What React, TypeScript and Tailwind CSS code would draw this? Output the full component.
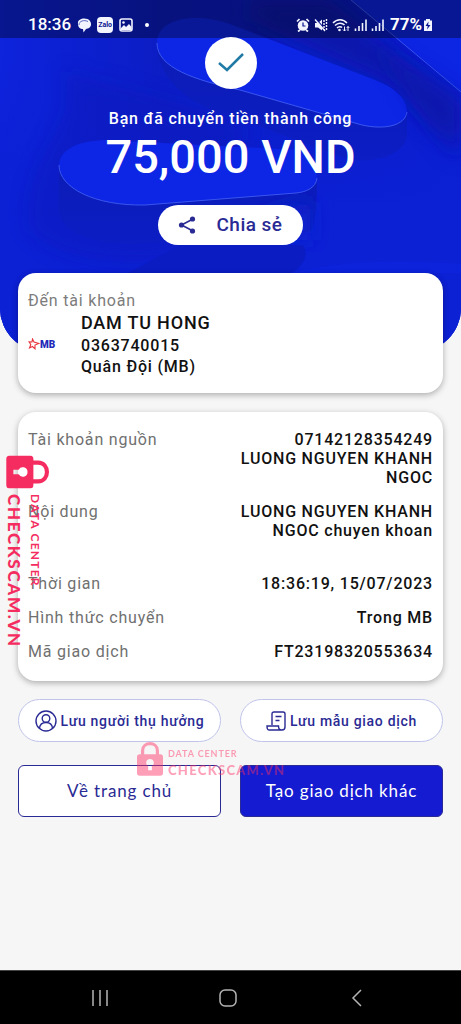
import type { ReactNode } from "react";

const details = [
    { label: "Tài khoản nguồn", lines: ["07142128354249", "LUONG NGUYEN KHANH NGOC"] },
    { label: "Nội dung", lines: ["LUONG NGUYEN KHANH NGOC chuyen khoan"], tall: true },
    { label: "Thời gian", lines: ["18:36:19, 15/07/2023"] },
    { label: "Hình thức chuyển", lines: ["Trong MB"] },
    { label: "Mã giao dịch", lines: ["FT23198320553634"] },
];

function HeroArt() {
    return (
        <svg className="absolute inset-0 h-full w-full" viewBox="0 0 461 352" preserveAspectRatio="none" aria-hidden="true">
            <defs>
                <linearGradient id="base" x1="0" y1="0" x2="1" y2="0">
                    <stop offset="0" stopColor="#0d23dc" />
                    <stop offset="0.35" stopColor="#0c1dc4" />
                    <stop offset="0.7" stopColor="#0b1cc6" />
                    <stop offset="1" stopColor="#0c20d2" />
                </linearGradient>
                <linearGradient id="floor" x1="0" y1="0" x2="0" y2="1">
                    <stop offset="0" stopColor="#0c20d4" stopOpacity="0" />
                    <stop offset="0.5" stopColor="#0c20d4" />
                </linearGradient>
                <linearGradient id="side" x1="0" y1="0" x2="0" y2="1">
                    <stop offset="0" stopColor="#0b1cb6" />
                    <stop offset="1" stopColor="#0c1ec4" />
                </linearGradient>
                <filter id="soft" x="-30%" y="-30%" width="160%" height="160%">
                    <feGaussianBlur stdDeviation="10" />
                </filter>
            </defs>
            <rect width="461" height="352" fill="url(#base)" />
            <rect y="60" width="461" height="292" fill="url(#floor)" />
            <path d="M60 70 C90 120 20 150 30 230 C80 280 200 260 250 245 L240 120Z" fill="#0a18b0" opacity="0.35" filter="url(#soft)" />
            <path d="M330 0 L461 105 V140 C420 130 410 90 370 75 L250 20 V0Z" fill="#0a16a0" opacity="0.7" filter="url(#soft)" />

            <path d="M157 43 C157 85 200 110 240 119 L350 160 C385 163 407 150 407 135 V105Z" fill="url(#side)" />
            <path d="M157 43 C157 18 195 12 230 24 L375 80 C398 89 407 100 407 112 C405 126 384 130 362 125 L240 90 C195 80 157 68 157 43Z" fill="#0d26e6" />
            <path d="M157 43 C157 68 195 80 240 90 L362 125 C384 130 405 126 407 112" fill="none" stroke="#3a56ee" strokeWidth="1" />

            <path d="M351 0 H461 V92Z" fill="#0d26e4" />
            <path d="M351 0 L461 92" stroke="#3a56ee" strokeWidth="1" />
            <path d="M461 93 V160 C440 145 415 112 405 90 L370 40Z" fill="#0a18ac" opacity="0.5" filter="url(#soft)" />

            <path d="M59 165 V212 C64 235 100 245 135 244 L310 232 C316 226 317 200 317 178Z" fill="url(#side)" />
            <path d="M200 240 L310 200 V240Z" fill="#0c20d0" filter="url(#soft)" />
            <path d="M59 165 C60 145 90 137 125 141 L300 150 C314 156 317 168 317 178 C316 188 306 192 296 193 L145 205 C95 206 59 188 59 165Z" fill="#0d25e4" />
            <path d="M59 165 C59 188 95 206 145 205 L296 193 C306 192 316 188 317 178" fill="none" stroke="#3a56ee" strokeWidth="1" />

            <path d="M128 273 L180 245 H303 C309 255 304 265 292 273Z" fill="#0b1cc2" />
            <path d="M0 273 H461 V264 C380 258 330 264 290 273Z" fill="#0d25e0" opacity="0.6" />
        </svg>
    );
}

function StatusBar() {
    return (
        <div className="relative flex h-[38px] items-center justify-between bg-black/35 pt-3 pr-7 pl-7 text-white">
            <div className="flex items-center gap-[5px]">
                <span className="text-[17px] font-medium">18:36</span>
                <svg className="h-4 w-4" viewBox="0 0 16 16" aria-hidden="true">
                    <path d="M2 7 C1 1 11 0 14 4 C17 9 13 12 10 12 L7.500 15.500 L7 12 C4 12 2 10 2 7Z" fill="#f2f4ff" />
                    <path d="M3 8 C3 4 8 2.500 12 4.500" fill="none" stroke="#5a66c0" strokeWidth="1" />
                </svg>
                <span className="flex h-4 w-4 items-center justify-center overflow-hidden rounded-[4px] bg-[#f2f4ff] text-[7px] font-bold text-[#0a1590]">Zalo</span>
                <svg className="h-4 w-4" viewBox="0 0 16 16" aria-hidden="true">
                    <rect x="2" y="2" width="12" height="12" rx="2" fill="none" stroke="#f2f4ff" strokeWidth="1.600" />
                    <path d="M3 13 V11 L6 8 L8 10 L11 7 L13.500 10 V13Z" fill="#f2f4ff" />
                    <circle cx="5.500" cy="5.500" r="1.300" fill="#f2f4ff" />
                </svg>
                <span className="ml-[6px] h-1 w-1 rounded-full bg-white" />
            </div>
            <div className="flex items-center gap-1">
                <svg className="h-[14px] w-[14px]" viewBox="0 0 14 14" aria-hidden="true">
                    <circle cx="7" cy="7.500" r="5.300" fill="#f2f4ff" />
                    <path d="M1 3.500 L3.500 1 M13 3.500 L10.500 1 M2 13.500 L4 12 M12 13.500 L10 12" stroke="#f2f4ff" strokeWidth="1.700" />
                    <path d="M7 4.500 V8 H9.500" fill="none" stroke="#0a1590" strokeWidth="1.200" />
                </svg>
                <svg className="h-[14px] w-[14px]" viewBox="0 0 14 14" aria-hidden="true">
                    <path d="M1 5 H4 L8 1.500 V12.500 L4 9.500 H1Z" fill="#f2f4ff" />
                    <path d="M2 1 L9 9" stroke="#0a1590" strokeWidth="1.200" />
                    <path d="M1 1.500 L11 13" stroke="#f2f4ff" strokeWidth="1.400" />
                    <path d="M10 2 V12 M12.500 1 V13" stroke="#f2f4ff" strokeWidth="1.400" strokeDasharray="2 1" />
                </svg>
                <svg className="h-[14px] w-[18px]" viewBox="0 0 18 14" aria-hidden="true">
                    <path d="M1 5 C5 0.500 11 0.500 15 5 M3 7.500 C6 4.500 10 4.500 12.500 7 M5 10 C6.500 8.500 9 8.500 10 9.500" fill="none" stroke="#f2f4ff" strokeWidth="1.500" />
                    <circle cx="7.500" cy="12" r="1.300" fill="#f2f4ff" />
                    <path d="M12.500 8.500 V13 M11 11.500 L12.500 13 L14 11.500 M16 13 V8.500 M14.700 10 L16 8.500 L17.300 10" fill="none" stroke="#f2f4ff" strokeWidth="1" />
                </svg>
                <Signal />
                <Signal />
                <span className="ml-[2px] flex items-center gap-px">
                    <span className="text-[17px] font-bold">77%</span>
                    <svg className="h-[14px] w-[10px]" viewBox="0 0 10 14" aria-hidden="true">
                        <path d="M3 1 H7 V2.500 H9 V13 H1 V2.500 H3Z" fill="#f2f4ff" />
                        <path d="M5.500 3.500 L2.500 8 H4.700 L4 11.500 L7.500 7 H5.200Z" fill="#0a1590" />
                    </svg>
                </span>
            </div>
        </div>
    );
}

function Signal() {
    return (
        <svg className="h-[14px] w-[13px]" viewBox="0 0 13 14" aria-hidden="true">
            <path d="M1.500 10.500 V13 M5 8 V13 M8.500 5 V13 M12 1.500 V13" stroke="#f2f4ff" strokeWidth="1.600" />
        </svg>
    );
}

function MbLogo() {
    return (
        <span className="flex w-[53px] shrink-0 items-center">
            <svg className="h-3 w-3" viewBox="0 0 12 12" aria-hidden="true">
                <path d="M4.500 1 L6 4 L10.800 5.500 L7 7 L7 10.800 L4.500 8.500 L1.500 10 L2.800 6.500 L1 3.800 L4 4Z" fill="none" stroke="#e8323c" strokeWidth="1.100" />
            </svg>
            <span className="text-[10px] font-black tracking-normal text-[#2229b8]">MB</span>
        </span>
    );
}

function Lock({ className }: { className: string }) {
    return (
        <svg className={className} viewBox="0 0 28 36" aria-hidden="true">
            <path d="M6 15 V9 C6 -1 22 -1 22 9 V15" fill="none" stroke="currentColor" strokeWidth="3.500" />
            <path fillRule="evenodd" d="M3 13 H25 Q28 13 28 16 V33 Q28 36 25 36 H3 Q0 36 0 33 V16 Q0 13 3 13Z M14 18 A4 4 0 0 0 12 25.500 V30 H16 V25.500 A4 4 0 0 0 14 18Z" fill="currentColor" />
        </svg>
    );
}

function Card({ children, className }: { children: ReactNode; className: string }) {
    return (
        <section className={`rounded-[18px] bg-white px-[10px] shadow-[0_2px_6px_rgba(0,0,0,0.3)] ${className}`}>
            {children}
        </section>
    );
}

export default function App() {
    return (
        <div className="relative flex min-h-screen flex-col bg-[#f6f6f6] font-[Roboto,sans-serif]">
            <header className="relative overflow-hidden rounded-b-[44px] bg-[#0c20d2] pb-[107px]">
                <HeroArt />
                <StatusBar />
                <div className="relative -mt-px flex flex-col items-center text-white">
                    <span className="flex h-[52px] w-[52px] items-center justify-center rounded-full bg-white">
                        <svg className="h-7 w-7" viewBox="0 0 28 28" fill="none" aria-hidden="true">
                            <path d="M2 14 L10 21 L26 5" stroke="#1f7ba6" strokeWidth="2.500" />
                        </svg>
                    </span>
                    <p className="mt-5 text-base leading-5 font-medium tracking-wider">Bạn đã chuyển tiền thành công</p>
                    <h1 className="text-[47px] leading-[56px] font-medium">75,000 VND</h1>
                    <button className="mt-5 flex h-10 items-center gap-5 rounded-full bg-white px-5 text-[19px] font-medium tracking-wide text-[#2a2a94]">
                        <svg className="h-[18px] w-[18px]" viewBox="0 0 18 18" aria-hidden="true">
                            <path d="M15 3 L3.500 9 L15 15" fill="none" stroke="currentColor" strokeWidth="1.600" />
                            <circle cx="14.500" cy="3" r="2.600" fill="currentColor" />
                            <circle cx="3.500" cy="9" r="2.600" fill="currentColor" />
                            <circle cx="14.500" cy="15" r="2.600" fill="currentColor" />
                        </svg>
                        Chia sẻ
                    </button>
                </div>
            </header>

            <main className="relative -mt-[79px] flex flex-col px-[18px] pb-10">
                <Card className="pt-[18px] pb-4 font-medium tracking-wider">
                    <h2 className="text-base leading-5 font-normal text-[#7c7c7c]">Đến tài khoản</h2>
                    <div className="flex items-center">
                        <MbLogo />
                        <div className="text-base leading-[21px] text-[#111]">
                            <p className="text-lg leading-6">DAM TU HONG</p>
                            <p>0363740015</p>
                            <p>Quân Đội (MB)</p>
                        </div>
                    </div>
                </Card>

                <Card className="mt-[19px] pt-[18px] pb-5">
                    <dl className="flex flex-col gap-[15px] text-base leading-[19px] tracking-wider">
                        {details.map((d) => (
                            <div key={d.label} className={`flex justify-between ${d.tall ? "min-h-[57px]" : ""}`}>
                                <dt className="text-[#707070]">{d.label}</dt>
                                <dd className="max-w-[200px] text-right font-medium text-[#111]">
                                    {d.lines.map((line) => (
                                        <p key={line}>{line}</p>
                                    ))}
                                </dd>
                            </div>
                        ))}
                    </dl>
                </Card>

                <div className="relative mt-[18px] grid grid-cols-2 gap-x-[19px] gap-y-[23px]">
                    <button className="flex h-[43px] items-center justify-center gap-1 rounded-full border border-[#c0c4ea] bg-white text-sm font-medium tracking-wider whitespace-nowrap text-[#2a2a94]">
                        <svg className="h-[22px] w-[22px]" viewBox="0 0 22 22" fill="none" stroke="currentColor" strokeWidth="1.400" aria-hidden="true">
                            <circle cx="11" cy="11" r="10" />
                            <circle cx="11" cy="8.500" r="3.800" />
                            <path d="M4.500 18 C5 14 8 12.500 11 12.500 C14 12.500 17 14 17.500 18" />
                        </svg>
                        Lưu người thụ hưởng
                    </button>
                    <button className="flex h-[43px] items-center justify-center gap-1 rounded-full border border-[#c0c4ea] bg-white text-sm font-medium tracking-wider whitespace-nowrap text-[#2a2a94]">
                        <svg className="h-5 w-5" viewBox="0 0 20 20" fill="none" stroke="currentColor" strokeWidth="1.400" aria-hidden="true">
                            <path d="M6 14 V3 Q6 1 8 1 H17 Q19 1 19 3 V16 Q19 19 16 19 H3 Q1 19 1 15 H12.500 Q12.500 19 15.500 19" />
                            <path d="M9.500 5.500 H15.500 M9.500 9.500 H13.500" />
                        </svg>
                        Lưu mẫu giao dịch
                    </button>
                    <button className="h-[52px] rounded-md border border-[#2a2a94] bg-white font-[Lato,sans-serif] text-[17px] tracking-wider whitespace-nowrap text-[#2a2a94]">Về trang chủ</button>
                    <button className="h-[52px] rounded-md border border-[#2a2a94] bg-[#141bd0] font-[Lato,sans-serif] text-[17px] tracking-wider whitespace-nowrap text-white">Tạo giao dịch khác</button>

                    <div className="pointer-events-none absolute top-[43px] left-[119px] flex gap-[5px] font-[Lato,sans-serif] text-[#ff2d62] opacity-45">
                        <Lock className="h-[34px] w-[26px]" />
                        <div className="pt-[7px] whitespace-nowrap">
                            <p className="text-[9px] leading-[10px] font-bold tracking-widest">DATA CENTER</p>
                            <p className="mt-1 text-[13px] leading-[14px] font-black tracking-widest">CHECKSCAM.VN</p>
                        </div>
                    </div>
                </div>
            </main>

            <div className="pointer-events-none absolute top-[449px] left-[5px] font-[Lato,sans-serif] text-[#f52c60]">
                <div className="flex h-[45px] w-11 items-center justify-center">
                    <Lock className="h-[44px] w-[33px] rotate-90" />
                </div>
                <div className="flex w-9 flex-col gap-[6px] whitespace-nowrap [writing-mode:vertical-rl]">
                    <p className="text-[12px] leading-3 font-bold tracking-widest">DATA CENTER</p>
                    <p className="text-[17px] leading-[18px] font-black tracking-widest">CHECKSCAM.VN</p>
                </div>
            </div>

            <nav className="mt-auto grid h-[54px] grid-cols-3 place-items-center border-t border-[#444] bg-black pr-10 pl-9 text-[#b4b4b4]">
                <button aria-label="Recent apps">
                    <svg className="h-[18px] w-[18px]" viewBox="0 0 18 18" fill="none" stroke="currentColor" strokeWidth="1.500" aria-hidden="true">
                        <path d="M2 1 V17 M9 1 V17 M16 1 V17" />
                    </svg>
                </button>
                <button aria-label="Home">
                    <svg className="h-[18px] w-[18px]" viewBox="0 0 18 18" fill="none" stroke="currentColor" strokeWidth="1.500" aria-hidden="true">
                        <rect x="1" y="1" width="16" height="16" rx="5" />
                    </svg>
                </button>
                <button aria-label="Back">
                    <svg className="h-[18px] w-[18px]" viewBox="0 0 18 18" fill="none" stroke="currentColor" strokeWidth="1.500" aria-hidden="true">
                        <path d="M13 1 L5 9 L13 17" />
                    </svg>
                </button>
            </nav>
        </div>
    );
}
